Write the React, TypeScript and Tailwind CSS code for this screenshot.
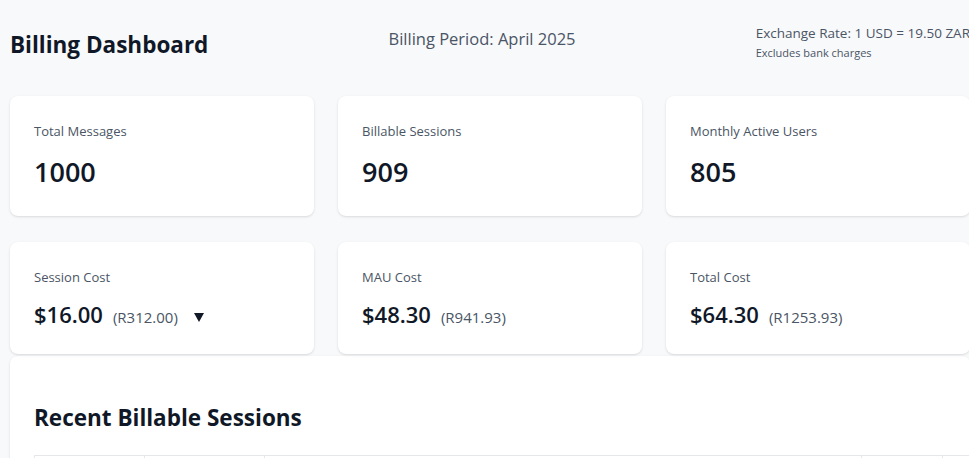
const stats = [
  { label: "Total Messages", value: "1000" },
  { label: "Billable Sessions", value: "909" },
  { label: "Monthly Active Users", value: "805" },
];

const costs = [
  { label: "Session Cost", usd: "$16.00", zar: "(R312.00)", toggle: true },
  { label: "MAU Cost", usd: "$48.30", zar: "(R941.93)" },
  { label: "Total Cost", usd: "$64.30", zar: "(R1253.93)" },
];

const colWidths = ["w-[110px]", "w-[120px]", "w-[597px]", "w-[81px]", ""];

export default function App() {
  return (
    <div className="h-screen w-full overflow-hidden bg-[#f8f9fb] font-['Open_Sans',sans-serif] text-gray-900">
      <div className="w-[980px] px-[10px]">
        <header className="flex justify-between items-start h-[96px]">
          <h1 className="mt-[29px] text-[22.5px] leading-8 font-bold">Billing Dashboard</h1>
          <div className="mt-[27px] text-[16.5px] leading-6 text-gray-600">Billing Period: April 2025</div>
          <div className="mt-[23px] text-gray-600">
            <div className="text-[13.5px] leading-5">Exchange Rate: 1 USD = 19.50 ZAR</div>
            <div className="mt-[2px] text-[11px] leading-4">Excludes bank charges</div>
          </div>
        </header>

        <div className="grid grid-cols-3 gap-6">
          {stats.map((s) => (
            <div key={s.label} className="bg-white rounded-lg shadow-sm p-6">
              <div className="mt-px text-[13px] leading-5 text-gray-600">{s.label}</div>
              <div className="mt-[11px] text-[27px] leading-[40px] font-semibold">{s.value}</div>
            </div>
          ))}
        </div>

        <div className="mt-[26px] grid grid-cols-3 gap-6">
          {costs.map((c) => (
            <div key={c.label} className="bg-white rounded-lg shadow-sm p-6">
              <div className="mt-px text-[13px] leading-5 text-gray-600">{c.label}</div>
              <div className="mt-[11px] flex items-baseline h-8">
                <span className="text-[22px] leading-8 font-semibold">{c.usd}</span>
                <span className="ml-[10px] text-[15px] text-gray-600">{c.zar}</span>
                {c.toggle && (
                  <svg className="ml-[16px] self-center mt-[6px]" width="10" height="9" viewBox="0 0 10 9">
                    <path d="M0 0h10L5 9z" fill="#111827" />
                  </svg>
                )}
              </div>
            </div>
          ))}
        </div>

        <div className="mt-[2px] bg-white rounded-lg shadow-sm pt-[46px] px-6 overflow-hidden">
          <h2 className="text-[22.5px] leading-8 font-bold">Recent Billable Sessions</h2>
          <table className="mt-[21px] w-[1000px] border-collapse">
            <thead>
              <tr>
                {colWidths.map((w, i) => (
                  <th key={i} className={"border border-gray-200 h-12 " + w}></th>
                ))}
              </tr>
            </thead>
          </table>
        </div>
      </div>
    </div>
  );
}
